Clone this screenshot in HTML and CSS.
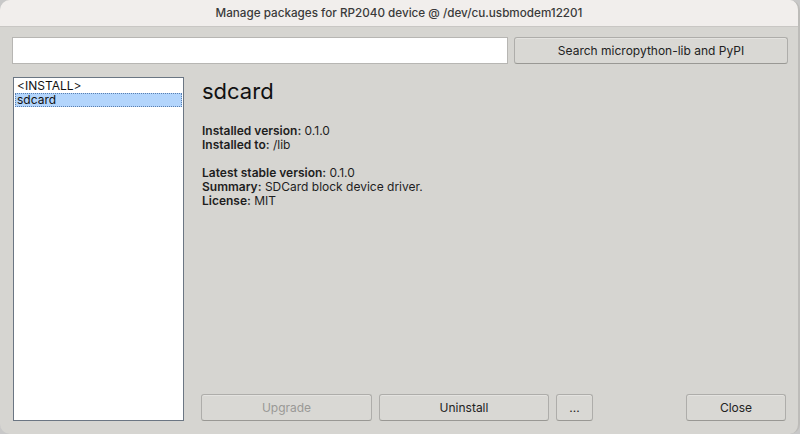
FILE: index.html
```html
<!DOCTYPE html>
<html>
<head>
<meta charset="utf-8">
<link rel="stylesheet" href="styles.css">
</head>
<body>
<div class="window">
  <div class="titlebar">Manage packages for RP2040 device @ /dev/cu.usbmodem12201</div>
  <div class="content">
    <div class="search-row">
      <input class="entry" type="text">
      <button class="btn search-btn">Search micropython-lib and PyPI</button>
    </div>
    <div class="main">
      <ul class="list">
        <li class="item">&lt;INSTALL&gt;</li>
        <li class="item selected">sdcard</li>
      </ul>
      <div class="details">
        <h1 class="pkg-name">sdcard</h1>
        <div class="info">
          <p><b>Installed version:</b> 0.1.0</p>
          <p><b>Installed to:</b> /lib</p>
          <p class="gap"><b>Latest stable version:</b> 0.1.0</p>
          <p><b>Summary:</b> SDCard block device driver.</p>
          <p><b>License:</b> MIT</p>
        </div>
        <div class="actions">
          <button class="btn upgrade" disabled>Upgrade</button>
          <button class="btn uninstall">Uninstall</button>
          <button class="btn more">...</button>
          <span class="spacer"></span>
          <button class="btn close">Close</button>
        </div>
      </div>
    </div>
  </div>
</div>
</body>
</html>
```
FILE: styles.css
```css
* { box-sizing: border-box; }
html, body { margin: 0; padding: 0; }
body {
  width: 800px;
  height: 434px;
  background: #c8c8c8;
  font-family: Inter, "Noto Sans", sans-serif;
  font-size: 12px;
  color: #222;
  overflow: hidden;
}
.window {
  width: 800px;
  height: 434px;
  border-radius: 10px;
  overflow: hidden;
  background: #d6d5d1;
  display: flex;
  flex-direction: column;
  border-right: 2px solid #bdbcb9;
}
.titlebar {
  height: 27px;
  flex: none;
  background: #f1eeec;
  border-bottom: 1px solid #c9c7c4;
  text-align: center;
  line-height: 27px;
  font-size: 11.7px;
  font-weight: 500;
  color: #3a3a3a;
}
.content {
  flex: 1;
  display: flex;
  flex-direction: column;
  padding: 10px 10px 13px 12px;
  min-height: 0;
}
.search-row {
  display: flex;
  gap: 6px;
  height: 27px;
  flex: none;
}
.entry {
  width: 496px;
  height: 27px;
  margin: 0;
  border: 1px solid #b7b6b3;
  background: #fff;
  outline: none;
}
.btn {
  font-family: Inter, "Noto Sans", sans-serif;
  font-size: 12px;
  color: #222;
  background: #d9d8d4;
  border: 1px solid #aeadaa;
  border-bottom-color: #999894;
  border-radius: 3px;
  height: 27px;
  margin: 0;
  padding: 0;
  box-shadow: inset 0 1px 0 #e4e3e0;
}
.search-btn { width: 274px; }
.main {
  flex: 1;
  display: flex;
  margin-top: 13px;
  min-height: 0;
}
.list {
  list-style: none;
  margin: 0 0 0 1px;
  padding: 1px;
  width: 171px;
  background: #fff;
  border: 1px solid #6b7683;
}
.item {
  height: 14px;
  line-height: 14px;
  padding-left: 2px;
  font-size: 12px;
  color: #111;
}
.selected {
  background: #b3d5fc;
  outline: 1px dotted #5a7fb0;
  outline-offset: -1px;
}
.details {
  flex: 1;
  display: flex;
  flex-direction: column;
  padding-left: 17px;
}
.pkg-name {
  margin: 0 0 0 1px;
  font-size: 22px;
  font-weight: 400;
  line-height: 28px;
  color: #111;
}
.info {
  margin-top: 19px;
  margin-left: 1px;
  flex: 1;
}
.info p {
  margin: 0;
  line-height: 14px;
  font-size: 12px;
  color: #1e1e1e;
}
.info b { font-weight: 600; }
.info .gap { margin-top: 14px; }
.actions {
  display: flex;
  gap: 7px;
  align-items: flex-end;
}
.upgrade { width: 171px; color: #9a9996; }
.uninstall { width: 170px; }
.more { width: 37px; }
.spacer { flex: 1; }
.close { width: 100px; margin-right: 2px; }
```
